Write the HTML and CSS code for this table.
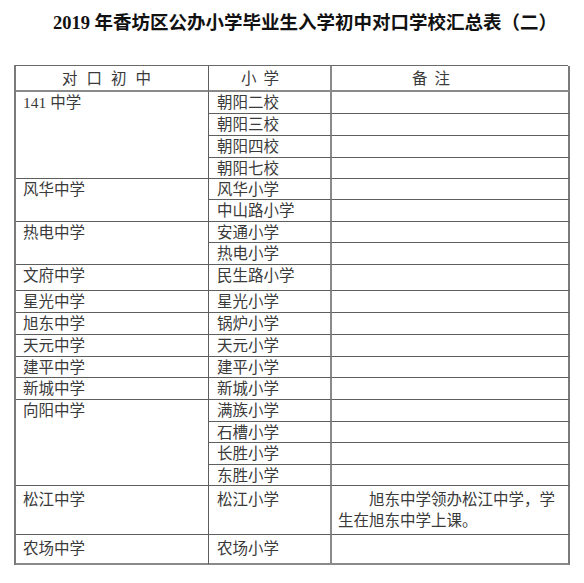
FILE: index.html
```html
<!DOCTYPE html>
<html lang="zh-CN">
<head>
<meta charset="utf-8">
<title>2019年香坊区公办小学毕业生入学初中对口学校汇总表（二）</title>
<link rel="stylesheet" href="styles.css">
</head>
<body>
<h1 class="title">2019 年香坊区公办小学毕业生入学初中对口学校汇总表（二）</h1>
<div class="sheet">
  <div class="cell c1 head h1">对口初中</div>
  <div class="cell c2 head h2">小学</div>
  <div class="cell c3 head h3">备注</div>

  <div class="cell c1 s4">141 中学</div>
  <div class="cell c2">朝阳二校</div><div class="cell c3"></div>
  <div class="cell c2">朝阳三校</div><div class="cell c3"></div>
  <div class="cell c2">朝阳四校</div><div class="cell c3"></div>
  <div class="cell c2">朝阳七校</div><div class="cell c3"></div>

  <div class="cell c1 s2">风华中学</div>
  <div class="cell c2">风华小学</div><div class="cell c3"></div>
  <div class="cell c2">中山路小学</div><div class="cell c3"></div>

  <div class="cell c1 s2">热电中学</div>
  <div class="cell c2">安通小学</div><div class="cell c3"></div>
  <div class="cell c2">热电小学</div><div class="cell c3"></div>

  <div class="cell c1">文府中学</div>
  <div class="cell c2">民生路小学</div><div class="cell c3"></div>

  <div class="cell c1">星光中学</div>
  <div class="cell c2">星光小学</div><div class="cell c3"></div>

  <div class="cell c1">旭东中学</div>
  <div class="cell c2">锅炉小学</div><div class="cell c3"></div>

  <div class="cell c1">天元中学</div>
  <div class="cell c2">天元小学</div><div class="cell c3"></div>

  <div class="cell c1">建平中学</div>
  <div class="cell c2">建平小学</div><div class="cell c3"></div>

  <div class="cell c1">新城中学</div>
  <div class="cell c2">新城小学</div><div class="cell c3"></div>

  <div class="cell c1 s4">向阳中学</div>
  <div class="cell c2">满族小学</div><div class="cell c3"></div>
  <div class="cell c2">石槽小学</div><div class="cell c3"></div>
  <div class="cell c2">长胜小学</div><div class="cell c3"></div>
  <div class="cell c2">东胜小学</div><div class="cell c3"></div>

  <div class="cell c1 tall">松江中学</div>
  <div class="cell c2 tall">松江小学</div>
  <div class="cell c3 tall note">旭东中学领办松江中学，学生在旭东中学上课。</div>

  <div class="cell c1 tall">农场中学</div>
  <div class="cell c2 tall">农场小学</div>
  <div class="cell c3"></div>
</div>
</body>
</html>
```

FILE: styles.css
```css
html, body {
  margin: 0;
  padding: 0;
  background: #ffffff;
}

body {
  width: 584px;
  height: 583px;
  overflow: hidden;
  font-family: "Liberation Serif", "Noto Sans CJK SC", serif;
  color: #3a3a3a;
}

.title {
  margin: 0;
  height: 46px;
  padding-left: 26px;
  font-size: 18.5px;
  line-height: 46px;
  font-weight: 700;
  text-align: center;
  color: #111111;
  white-space: nowrap;
}

.sheet {
  margin: 19px 0 0 14px;
  width: 554px;
  display: grid;
  grid-template-columns: 193px 123px 238px;
  grid-template-rows:
    26px 22px 22px 22px 21px 21px 22px 21px 22px 26px
    22px 22px 22px 21px 22px 22px 21px 22px 21px 49px 30px;
  border-top: 1px solid #6a6a6a;
  border-left: 2px solid #7a7a7a;
  box-sizing: border-box;
}

.cell {
  box-sizing: border-box;
  border-right: 1px solid #5e5e5e;
  border-bottom: 1px solid #5e5e5e;
  padding: 0 0 0 8px;
  font-size: 15.5px;
  line-height: 21px;
  white-space: nowrap;
  overflow: hidden;
}

.c1 { grid-column: 1; padding-left: 7px; }
.c2 { grid-column: 2; border-right: 2px solid #8a8a8a; }
.c3 { grid-column: 3; border-right: 2px solid #7a7a7a; }

.s2 { grid-row: span 2; }
.s4 { grid-row: span 4; }

.head {
  padding: 2px 0 0 0;
  text-align: center;
  line-height: 22px;
  border-bottom: 2px solid #8a8a8a;
}

.h1 { letter-spacing: 9px; padding-right: 2px; }
.h2 { letter-spacing: 7px; padding-right: 12px; }
.h3 { letter-spacing: 7px; padding-right: 31px; }

.tall { padding-top: 3px; }

.note {
  padding: 3px 6px 0 6px;
  white-space: normal;
  text-indent: 2em;
  line-height: 21px;
}

.sheet > .cell:nth-last-child(-n+3) {
  border-bottom: 2px solid #8a8a8a;
}
```
